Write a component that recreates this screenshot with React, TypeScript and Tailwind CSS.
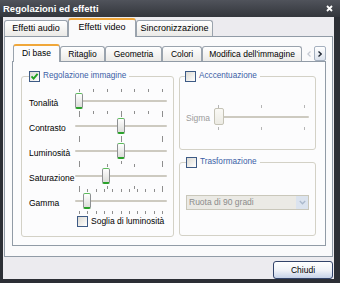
import type { ReactNode } from "react";

const FONT = "font-['Liberation_Sans',Arial,sans-serif]";

function Check({ checked = false }: { checked?: boolean }) {
  return (
    <span className="flex h-[11px] w-[11px] shrink-0 items-center justify-center border border-[#3d5a85] bg-linear-to-br from-[#dcdad3] to-white">
      {checked && (
        <svg width="9" height="9" viewBox="0 0 9 9">
          <path d="M1.5 4.3 L3.6 6.6 L7.6 1.8" fill="none" stroke="#21a121" strokeWidth="1.9" />
        </svg>
      )}
    </span>
  );
}

function Slider({
  value,
  ticks,
  disabled = false,
}: {
  value: number;
  ticks: number;
  disabled?: boolean;
}) {
  const marks = Array.from({ length: ticks }, (_, i) => i / (ticks - 1));
  const tickColor = disabled ? "bg-[#b5b5b5]" : "bg-[#8e8e8e]";
  return (
    <div className="relative h-[25px] flex-1">
      <div className="absolute left-0 right-0 top-[12px] h-[2px] rounded-full bg-[#cdcac0]" />
      {marks.map((t, i) => (
        <div key={i}>
          <div
            className={`absolute top-[1px] h-[3px] w-px ${tickColor}`}
            style={{ left: `calc(4px + (100% - 9px) * ${t})` }}
          />
          <div
            className={`absolute top-[23px] h-[3px] w-px ${tickColor}`}
            style={{ left: `calc(4px + (100% - 9px) * ${t})` }}
          />
        </div>
      ))}
      {disabled ? (
        <div
          className="absolute top-[4px] h-[17px] w-[10px] rounded-[2px] border border-[#c5c3b6] bg-linear-to-b from-[#faf9f5] to-[#ecebe4]"
          style={{ left: `calc((100% - 10px) * ${value})` }}
        />
      ) : (
        <div
          className="absolute top-[5px] h-[16px] w-[8px] rounded-[2px] border border-[#8d9092] border-t-[#5cbc5c] border-b-2 border-b-[#2aa12a] bg-linear-to-b from-white to-[#dcddd9]"
          style={{ left: `calc((100% - 9px) * ${value})` }}
        />
      )}
    </div>
  );
}

function SliderRow({ label, value, ticks }: { label: string; value: number; ticks: number }) {
  return (
    <div className="flex h-[25px] items-center">
      <span className="w-[46px] shrink-0 whitespace-nowrap pt-[5px]">{label}</span>
      <Slider value={value} ticks={ticks} />
    </div>
  );
}

function Group({
  legend,
  checked,
  className,
  legendClass,
  children,
}: {
  legend: string;
  checked?: boolean;
  className: string;
  legendClass: string;
  children: ReactNode;
}) {
  return (
    <fieldset className={`rounded-[3px] border border-[#d3d1c6] ${className}`}>
      <legend className={legendClass}>
        <span className="flex h-[11px] items-center gap-[3px] whitespace-nowrap pr-[3px] text-[8.2px] text-[#3b5ea6]">
          <Check checked={checked} />
          {legend}
        </span>
      </legend>
      {children}
    </fieldset>
  );
}

export default function App() {
  return (
    <div className={`flex h-[283px] w-[340px] flex-col bg-[#2c2f35] text-[8.5px] leading-none text-black ${FONT}`}>
      {/* title bar */}
      <div className="flex h-[17px] shrink-0 items-center justify-between bg-linear-to-b from-[#50535b] to-[#33363c] pl-[3px] pr-[7px]">
        <span className="text-[9.5px] font-bold text-white">Regolazioni ed effetti</span>
        <svg width="7" height="7" viewBox="0 0 7 7">
          <path d="M1 1L6 6M6 1L1 6" stroke="white" strokeWidth="1.8" />
        </svg>
      </div>

      <div className="mb-[4px] ml-[3px] mr-[6px] flex flex-1 flex-col bg-[#ecebef]">
        {/* outer tabs */}
        <div className="flex h-[19px] shrink-0 items-end pl-[1px] text-[9px]">
          <div className="flex h-[16px] w-[64px] items-center justify-center rounded-t-[3px] border border-b-0 border-[#9aa3ad] bg-linear-to-b from-white to-[#ebeae7]">
            Effetti audio
          </div>
          <div className="relative z-10 -mb-px flex h-[19px] w-[68px] items-center justify-center rounded-t-[3px] border-x border-t-2 border-x-[#9aa3ad] border-t-[#f0a73a] bg-[#fafafb] pb-[2px]">
            Effetti video
          </div>
          <div className="flex h-[16px] w-[77px] items-center justify-center rounded-t-[3px] border border-b-0 border-[#9aa3ad] bg-linear-to-b from-white to-[#ebeae7]">
            Sincronizzazione
          </div>
        </div>

        {/* outer panel */}
        <div className="ml-[1px] flex h-[221px] w-[329px] shrink-0 flex-col border border-[#919ba6] bg-[#fafafb]">
          {/* inner tabs */}
          <div className="flex h-[24px] shrink-0 items-end whitespace-nowrap pl-[8px] pr-[6px]">
            <div className="relative z-10 -mb-px flex h-[18px] w-[47px] items-center justify-center rounded-t-[3px] border-x border-t-2 border-x-[#9aa3ad] border-t-[#f0a73a] bg-[#fcfcfd] pb-[2px]">
              Di base
            </div>
            <div className="flex h-[15px] w-[45px] items-center justify-center rounded-t-[3px] border border-b-0 border-[#9aa3ad] bg-linear-to-b from-white to-[#ebeae7]">
              Ritaglio
            </div>
            <div className="flex h-[15px] w-[57px] items-center justify-center rounded-t-[3px] border border-b-0 border-[#9aa3ad] bg-linear-to-b from-white to-[#ebeae7]">
              Geometria
            </div>
            <div className="flex h-[15px] w-[40px] items-center justify-center rounded-t-[3px] border border-b-0 border-[#9aa3ad] bg-linear-to-b from-white to-[#ebeae7]">
              Colori
            </div>
            <div className="flex h-[15px] w-[100px] items-center justify-center rounded-t-[3px] border border-b-0 border-[#9aa3ad] bg-linear-to-b from-white to-[#ebeae7]">
              Modifica dell'immagine
            </div>
            <div className="ml-auto flex h-[15px] items-center">
              <div className="flex h-[15px] w-[10px] items-center justify-center">
                <svg width="4" height="6" viewBox="0 0 4 6">
                  <path d="M3.5 0.5L0.8 3L3.5 5.5" fill="none" stroke="#c4c9d1" strokeWidth="1.2" />
                </svg>
              </div>
              <div className="flex h-[15px] w-[12px] items-center justify-center rounded-[2px] border border-[#a5b0bf] bg-linear-to-b from-white to-[#dbe2ed]">
                <svg width="4" height="6" viewBox="0 0 4 6">
                  <path d="M0.5 0.5L3.2 3L0.5 5.5" fill="none" stroke="#1f2733" strokeWidth="1.3" />
                </svg>
              </div>
            </div>
          </div>

          {/* inner panel */}
          <div className="ml-[7px] flex h-[185px] w-[314px] shrink-0 gap-[5px] border border-[#919ba6] bg-[#fcfcfd] pl-[8px] pt-[9px]">
            <Group
              legend="Regolazione immagine"
              checked
              className="w-[153px] self-start pb-[9px] pl-[7px] pr-[6px]"
              legendClass="ml-0"
            >
              <div className="flex flex-col pt-[6px]">
                <SliderRow label="Tonalità" value={0} ticks={7} />
                <SliderRow label="Contrasto" value={0.5} ticks={3} />
                <SliderRow label="Luminosità" value={0.5} ticks={3} />
                <SliderRow label="Saturazione" value={0.33} ticks={4} />
                <SliderRow label="Gamma" value={0.1} ticks={11} />
                <div className="mt-[3px] flex h-[11px] items-center gap-[3px] whitespace-nowrap pl-[48px]">
                  <Check />
                  <span>Soglia di luminosità</span>
                </div>
              </div>
            </Group>

            <div className="flex w-[137px] flex-col gap-[7px]">
              <Group
                legend="Acccentuazione"
                className="pb-[20px] pl-[6px] pr-[6px]"
                legendClass="-ml-px"
              >
                <div className="flex h-[25px] items-center pt-[22px] box-content">
                  <span className="w-[28px] shrink-0 pt-[3px] text-[#9b9b9b]">Sigma</span>
                  <Slider value={0} ticks={3} disabled />
                </div>
              </Group>
              <Group
                legend="Trasformazione"
                className="pb-[25px] pl-[6px] pr-[6px]"
                legendClass="ml-0"
              >
                <div className="pt-[27px]">
                  <div className="flex h-[15px] items-center border border-[#c9c7ba] bg-[#ebeae5] pl-[2px] text-[#8c8c8c]">
                    <span className="flex-1">Ruota di 90 gradi</span>
                    <span className="flex h-[13px] w-[12px] items-center justify-center bg-[#dbe3ee]">
                      <svg width="7" height="5" viewBox="0 0 7 5">
                        <path d="M0.8 1L3.5 3.8L6.2 1" fill="none" stroke="#aab8cb" strokeWidth="1.3" />
                      </svg>
                    </span>
                  </div>
                </div>
              </Group>
            </div>
          </div>
        </div>

        {/* buttons */}
        <div className="flex flex-1 items-start justify-end pr-[1px] pt-[4px]">
          <button
            type="button"
            className="h-[18px] w-[60px] rounded-[3px] border border-[#33446a] bg-linear-to-b from-white via-[#f1f3f8] to-[#c6d2e8] text-[8.5px] leading-none"
          >
            Chiudi
          </button>
        </div>
      </div>
    </div>
  );
}
